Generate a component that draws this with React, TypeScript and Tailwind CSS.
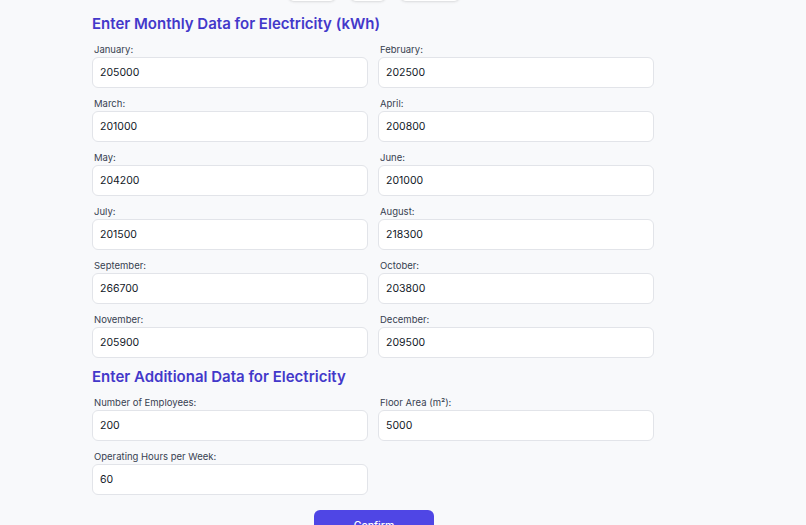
import React from 'react'

const months: [string, string][] = [
  ['January', '205000'],
  ['February', '202500'],
  ['March', '201000'],
  ['April', '200800'],
  ['May', '204200'],
  ['June', '201000'],
  ['July', '201500'],
  ['August', '218300'],
  ['September', '266700'],
  ['October', '203800'],
  ['November', '205900'],
  ['December', '209500'],
]

function Field({ label, value }: { label: string; value: string }) {
  return (
    <div className="flex flex-col">
      <label className="text-[9.5px] leading-[10px] text-[#374151] pl-[2px] mb-[2px]">{label}</label>
      <input
        defaultValue={value}
        className="h-[31px] rounded-[6px] border border-[#e2e4e9] bg-white px-[7px] text-[10.5px] text-[#111827] outline-none"
      />
    </div>
  )
}

export default function App() {
  return (
    <div className="min-h-[525px] bg-[#f8f9fb] font-['Inter',sans-serif]">
      <div className="ml-[92px] w-[562px]">
        {/* tab buttons scrolled out of view */}
        <div className="flex justify-center gap-[14px] -mt-[30px] h-[31px] pl-[2px]">
          <div className="w-[48px] h-[31px] rounded-[6px] bg-white shadow-sm" />
          <div className="w-[36px] h-[31px] rounded-[6px] bg-white shadow-sm" />
          <div className="w-[60px] h-[31px] rounded-[6px] bg-white shadow-sm" />
        </div>

        <h2 className="mt-[12px] text-[15px] leading-[22px] font-semibold text-[#4338ca]">
          Enter Monthly Data for Electricity (kWh)
        </h2>
        <div className="mt-[10px] grid grid-cols-2 gap-x-[10px] gap-y-[11px]">
          {months.map(([m, v]) => (
            <Field key={m} label={`${m}:`} value={v} />
          ))}
        </div>

        <h2 className="mt-[8px] text-[15px] leading-[22px] font-semibold text-[#4338ca]">
          Enter Additional Data for Electricity
        </h2>
        <div className="mt-[10px] grid grid-cols-2 gap-x-[10px] gap-y-[11px]">
          <Field label="Number of Employees:" value="200" />
          <Field label="Floor Area (m²):" value="5000" />
          <Field label="Operating Hours per Week:" value="60" />
        </div>

        <div className="flex justify-center mt-[15px] pl-[2px]">
          <button className="w-[120px] h-[32px] rounded-[6px] bg-[#4f46e5] text-white text-[10.5px] font-medium">
            Confirm
          </button>
        </div>
      </div>
    </div>
  )
}
